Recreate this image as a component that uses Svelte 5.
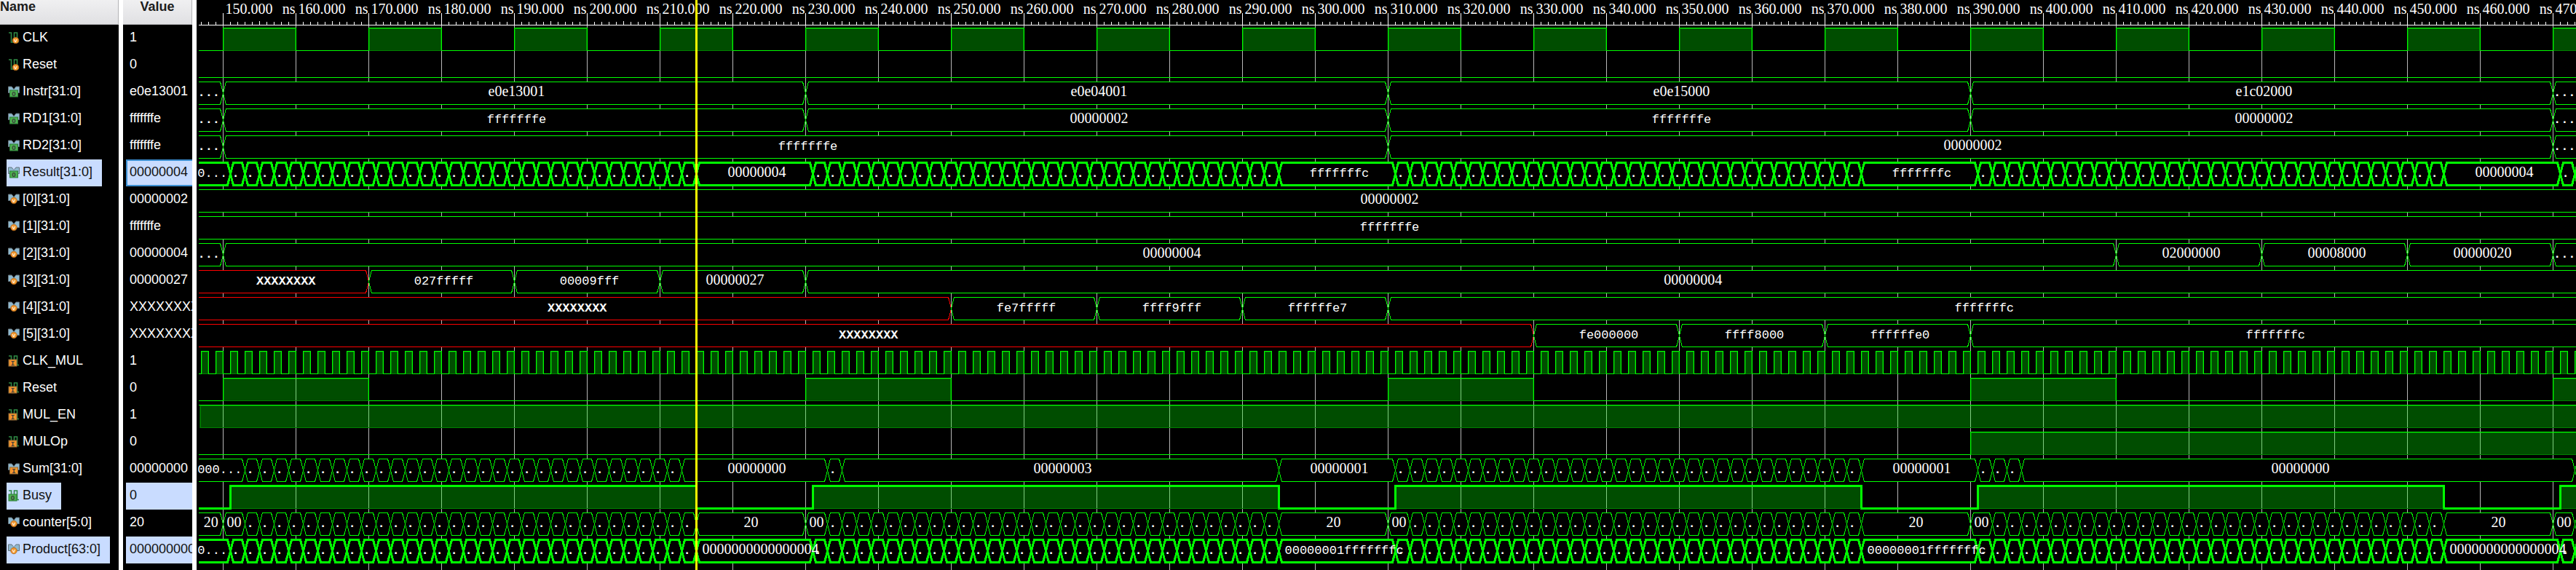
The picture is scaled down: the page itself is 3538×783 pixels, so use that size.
<script>
  const ROW = 37;
  const HEAD = 34;
  const FOOT = 9;
  const SCALE = 10; // pixels per nanosecond
  const ORIGIN = 150; // time of the first labelled division
  const LEFT = 3;
  const CURSOR = 215;

  let width = $state(3268);

  const xOf = (t) => 36.5 + (t - ORIGIN) * SCALE;

  // Buses are lists of [end time, value, unknown?]; a null end runs to the edge.
  function steps(from, to, text = '.') {
    const out = [];
    for (let t = from + 2; t <= to; t += 2) out.push([t, text]);
    return out;
  }

  const resultBus = (a, b) => [
    [151, '0...'],
    ...steps(151, 215),
    [231, a],
    ...steps(231, 295),
    [311, b],
    ...steps(311, 375),
    [391, b],
    ...steps(391, 455),
    [471, a],
    [473, '.'],
    [null, '']
  ];

  const clk = [];
  for (let t = 150; t < 480; t += 20) clk.push([t, t + 10]);
  const clkMul = [];
  for (let t = 147; t < 480; t += 2) clkMul.push([t, t + 1]);

  const signals = [
    { name: 'CLK', value: '1', kind: 'bit', badge: 'V', high: clk },
    { name: 'Reset', value: '0', kind: 'bit', badge: 'V', high: [] },
    {
      name: 'Instr[31:0]', value: 'e0e13001', kind: 'bus', badge: 'O',
      bus: [[150, '...'], [230, 'e0e13001'], [310, 'e0e04001'], [390, 'e0e15000'], [470, 'e1c02000'], [null, '...']]
    },
    {
      name: 'RD1[31:0]', value: 'fffffffe', kind: 'bus', badge: 'O',
      bus: [[150, '...'], [230, 'fffffffe'], [310, '00000002'], [390, 'fffffffe'], [470, '00000002'], [null, '...']]
    },
    {
      name: 'RD2[31:0]', value: 'fffffffe', kind: 'bus', badge: 'O',
      bus: [[150, '...'], [310, 'fffffffe'], [470, '00000002'], [null, '...']]
    },
    {
      name: 'Result[31:0]', value: '00000004', kind: 'bus', badge: 'O', selected: true, focused: true,
      bus: resultBus('00000004', 'fffffffc')
    },
    { name: '[0][31:0]', value: '00000002', kind: 'bus', badge: 'V', bus: [[null, '00000002']] },
    { name: '[1][31:0]', value: 'fffffffe', kind: 'bus', badge: 'V', bus: [[null, 'fffffffe']] },
    {
      name: '[2][31:0]', value: '00000004', kind: 'bus', badge: 'V',
      bus: [[150, '...'], [410, '00000004'], [430, '02000000'], [450, '00008000'], [470, '00000020'], [null, '...']]
    },
    {
      name: '[3][31:0]', value: '00000027', kind: 'bus', badge: 'V',
      bus: [[170, 'XXXXXXXX', true], [190, '027fffff'], [210, '00009fff'], [230, '00000027'], [null, '00000004']]
    },
    {
      name: '[4][31:0]', value: 'XXXXXXXX', kind: 'bus', badge: 'V',
      bus: [[250, 'XXXXXXXX', true], [270, 'fe7fffff'], [290, 'ffff9fff'], [310, 'ffffffe7'], [null, 'fffffffc']]
    },
    {
      name: '[5][31:0]', value: 'XXXXXXXX', kind: 'bus', badge: 'V',
      bus: [[330, 'XXXXXXXX', true], [350, 'fe000000'], [370, 'ffff8000'], [390, 'ffffffe0'], [null, 'fffffffc']]
    },
    { name: 'CLK_MUL', value: '1', kind: 'bit', badge: 'I', high: clkMul },
    { name: 'Reset', value: '0', kind: 'bit', badge: 'I', high: [[150, 170], [230, 250], [310, 330], [390, 410], [470, null]] },
    { name: 'MUL_EN', value: '1', kind: 'bit', badge: 'I', high: [[null, null]] },
    { name: 'MULOp', value: '0', kind: 'bit', badge: 'I', high: [[390, null]] },
    {
      name: 'Sum[31:0]', value: '00000000', kind: 'bus', badge: 'I',
      bus: [
        [153, '000...'], ...steps(153, 213), [233, '00000000'], [235, '.'], [295, '00000003'],
        [311, '00000001'], ...steps(311, 375), [391, '00000001'], ...steps(391, 397), [473, '00000000'], [null, '']
      ]
    },
    {
      name: 'Busy', value: '0', kind: 'bit', badge: 'O', selected: true,
      high: [[151, 215], [231, 295], [311, 375], [391, 455], [471, null]]
    },
    {
      name: 'counter[5:0]', value: '20', kind: 'bus', badge: 'V',
      bus: [
        [150, '20'], [153, '00'], ...steps(153, 215), [230, '20'], [233, '00'], ...steps(233, 295),
        [310, '20'], [313, '00'], ...steps(313, 375), [390, '20'], [393, '00'], ...steps(393, 455),
        [470, '20'], [473, '00'], [null, '']
      ]
    },
    {
      name: 'Product[63:0]', value: '0000000000000004', kind: 'bus', badge: 'V', selected: true,
      bus: resultBus('0000000000000004', '00000001fffffffc')
    }
  ];

  const height = HEAD + signals.length * ROW + FOOT;

  function cells(bus, top, right) {
    const hi = top + 4.5;
    const lo = top + 35.5;
    const mid = top + 20;
    const out = [];
    let start = null;
    for (const [end, text, unknown] of bus) {
      const a = start === null ? LEFT : xOf(start);
      const b = end === null ? right : xOf(end);
      if (a >= right) break;
      let d = start === null ? `M${a} ${hi}` : `M${a} ${mid}L${a + 4} ${hi}`;
      d += end === null ? `H${b}M${b} ${lo}` : `H${b - 4}L${b} ${mid}L${b - 4} ${lo}`;
      d += start === null ? `H${a}` : `H${a + 4}L${a} ${mid}`;
      const body = `M${start === null ? a : a + 4} ${hi}H${end === null ? b : b - 4}L${b} ${mid}L${end === null ? b : b - 4} ${lo}H${start === null ? a : a + 4}L${a} ${mid}Z`;
      const centre = (a + Math.min(b, right)) / 2;
      const wide = text.length > 8;
      const shift = text.length >= 8 ? 3 : text.endsWith('.') && end !== null ? -3 : 0;
      out.push({
        d, body, text, unknown, wide,
        x: wide ? a + 8 : centre + shift,
        y: top + 24,
        mono: /[fX.]/.test(text)
      });
      start = end;
    }
    return out;
  }

  function levels(high, top, right) {
    const hi = top + 4.5;
    const lo = top + 35.5;
    const boxes = [];
    let line = '';
    let pen = false;
    for (const [s, e] of high) {
      const a = s === null ? LEFT + 1 : xOf(s);
      const b = e === null ? right + 4 : xOf(e);
      if (a >= right) break;
      boxes.push({ x: a, y: hi, w: b - a, h: lo - hi });
      if (s === null) line += `M${LEFT} ${hi}`;
      else line += `${pen ? '' : `M${LEFT} ${lo}`}H${a}V${hi}`;
      line += e === null ? `H${b}` : `H${b}V${lo}`;
      pen = true;
    }
    const last = high[high.length - 1];
    if (!last) line = `M${LEFT} ${lo}H${right}`;
    else if (last[1] !== null) line += `H${right}`;
    return { boxes, line };
  }

  const rows = $derived(
    signals.map((s, i) => {
      const top = HEAD + i * ROW;
      return s.kind === 'bus'
        ? { ...s, cells: cells(s.bus, top, width) }
        : { ...s, ...levels(s.high, top, width) };
    })
  );

  const ticks = $derived.by(() => {
    const out = [];
    for (let t = 147; xOf(t) < width; t++) {
      out.push({ t, x: xOf(t), major: t % 10 === 0, mid: t % 5 === 0 });
    }
    return out;
  });
  const majors = $derived(ticks.filter((k) => k.major));
</script>

{#snippet icon(kind, badge)}
  <svg class="icon" viewBox="0 0 16 16" width="16" height="16" aria-hidden="true">
    {#if kind === 'bit'}
      <path d="M1 1H4.5V14H8.5V1H12.5V13.5H15" fill="none" stroke="#2f8a45" stroke-width="1.6" />
    {:else}
      <path d="M.5 1H5L8 4.500L11 1H15.500V9.500H.5Z" fill="#8fb9cf" stroke="#66757d" />
      <path d="M5.500 0L8 4L10.500 0Z" fill={'var(--row-bg)'} />
    {/if}
    {#if badge === 'V'}
      {@const cx = kind === 'bit' ? 10.5 : 8}
      {@const cy = kind === 'bit' ? 11.5 : 9.5}
      <circle {cx} {cy} r="4.300" fill="#f3952b" stroke="#a8651c" stroke-width=".8" />
      <text x={cx} y={cy + 2} class="badge pale">v</text>
    {:else}
      {@const x = kind === 'bit' ? 1 : 2.5}
      <rect {x} y="6" width="11" height="9" fill={badge === 'O' ? '#4bb04f' : '#f3952b'} stroke={badge === 'O' ? '#2f7d38' : '#8d6a3c'} />
      <text x={x + 5.5} y="13.500" class="badge">{badge}</text>
    {/if}
  </svg>
{/snippet}

<main class="viewer">
  <table class="signals">
    <thead>
      <tr>
        <th class="name" scope="col"><div class="head">Name</div></th>
        <th class="value" scope="col"><div class="head centred">Value</div></th>
      </tr>
    </thead>
    <tbody>
      {#each signals as s}
        <tr>
          <td class="name">
            <div class="label" class:selected={s.selected}>{@render icon(s.kind, s.badge)}<span>{s.name}</span></div>
          </td>
          <td class="value">
            <div class="reading" class:selected={s.selected} class:focused={s.focused}>{s.value}</div>
          </td>
        </tr>
      {/each}
    </tbody>
  </table>

  <section class="plot" aria-label="Waveforms" bind:clientWidth={width}>
    <svg class="waves" {height} role="img" aria-label="Signal waveforms over time">
      <g class="crisp">
        {#each majors as k}
          <path class="grid" d="M{k.x} {HEAD}V{height}" />
        {/each}
        <path class="ruler" d="M{LEFT} {HEAD + 0.5}H{width}" />
        {#each ticks as k}
          <path class="ruler" d="M{k.x} {HEAD}V{k.major ? 18 : k.mid ? 29 : 30}" />
        {/each}
      </g>
      {#each majors as k}
        <text class="digits" x={k.x + 3} y="19">{k.t}.000</text>
        <text class="digits" x={k.x + 99} y="19" text-anchor="end">ns</text>
      {/each}

      {#each rows as r}
        <g class="crisp" class:bold={r.selected}>
          {#if r.kind === 'bus'}
            {#each r.cells as c}
              <path class="body" d={c.body} />
            {/each}
            {#each r.cells as c}
              <path class="trace" class:unknown={c.unknown} d={c.d} />
            {/each}
          {:else}
            {#each r.boxes as b}
              <rect class="level" x={b.x} y={b.y} width={b.w} height={b.h} />
              <rect class="rim" x={b.x + 1} y={b.y + 1} width={b.w - 2} height={b.h - 1} />
            {/each}
            <path class="trace" d={r.line} />
            {#each r.boxes as b}
              <path class="base" d="M{b.x + 2} {b.y + b.h}H{b.x + b.w - 1}" />
            {/each}
          {/if}
        </g>
        {#if r.kind === 'bus'}
          {#each r.cells as c}
            {#if c.text}
              <text class={c.mono ? 'mono' : 'digits'} class:strong={c.unknown || c.text === '.' || c.text === '...'} x={c.x} y={c.y} text-anchor={c.wide ? 'start' : 'middle'}>{c.text}</text>
            {/if}
          {/each}
        {/if}
      {/each}

      <path class="cursor crisp" d="M{xOf(CURSOR)} 0V{height}" />
    </svg>
  </section>
</main>

<style>
  :global(body) {
    margin: 0;
    background: #000;
  }

  .viewer {
    display: flex;
    align-items: flex-start;
    min-height: 100vh;
    overflow: hidden;
    background: linear-gradient(#fff, #fff) 163px 0 / 6px 100% no-repeat,
      linear-gradient(#fff, #fff) 264px 0 / 6px 100% no-repeat, #000;
    color: #fff;
    font-family: "Liberation Sans", Arial, sans-serif;
    font-size: 18px;
  }

  .signals {
    flex: none;
    width: 270px;
    table-layout: fixed;
    border-spacing: 0;
  }

  th,
  td {
    padding: 0;
    overflow: hidden;
    text-align: left;
    vertical-align: top;
  }

  .name {
    width: 163px;
    border-right: 6px solid #fff;
  }

  .value {
    width: 95px;
    border-right: 6px solid #fff;
  }

  .head {
    box-sizing: border-box;
    height: 34px;
    border-right: 1px solid #b4b4b6;
    border-bottom: 1px solid #b4b4b6;
    background: linear-gradient(#f0f0f1, #e0e0e3);
    color: #1c1c1c;
    line-height: 18px;
  }

  .centred {
    text-align: center;
  }

  .label,
  .reading {
    --row-bg: #000;
    box-sizing: border-box;
    height: 37px;
    line-height: 35px;
    white-space: nowrap;
  }

  .label {
    display: flex;
    gap: 4px;
    width: max-content;
    margin-left: 9px;
    padding: 0 13px 0 2px;
  }

  .reading {
    margin-left: 4px;
    padding-left: 5px;
    overflow: hidden;
  }

  .selected {
    --row-bg: #c9dcff;
    background: #c9dcff;
    color: #111;
  }

  .focused {
    padding-left: 3px;
    border: 2px solid #3d8fd1;
    border-right: 0;
    line-height: 31px;
  }

  .icon {
    margin-top: 10px;
  }

  .badge {
    fill: #3c3c3c;
    font: bold 9px "Liberation Mono", monospace;
    text-anchor: middle;
  }

  .pale {
    fill: #fff3df;
    font-size: 8px;
  }

  .plot {
    flex: 1;
    min-width: 0;
    overflow: hidden;
  }

  .waves {
    display: block;
    width: 100%;
  }

  .crisp {
    shape-rendering: crispEdges;
  }

  .grid {
    stroke: #b8b8b8;
  }

  .ruler {
    stroke: #fff;
  }

  .body {
    fill: #000;
  }

  .trace {
    fill: none;
    stroke: #0f0;
  }

  .unknown {
    stroke: #f00;
  }

  .bold .trace {
    stroke-width: 3;
  }

  .level {
    fill: rgb(0 255 0 / 0.3);
  }

  .rim {
    fill: none;
    stroke: rgb(0 255 0 / 0.3);
  }

  .base {
    stroke: #008000;
  }

  .cursor {
    stroke: #ff0;
    stroke-width: 3;
  }

  text {
    fill: #fff;
  }

  .digits {
    font-family: "Liberation Serif", "Times New Roman", serif;
    font-size: 20px;
  }

  .mono {
    font-family: "Liberation Mono", "Courier New", monospace;
    font-size: 17px;
  }

  .strong {
    font-weight: bold;
  }
</style>
